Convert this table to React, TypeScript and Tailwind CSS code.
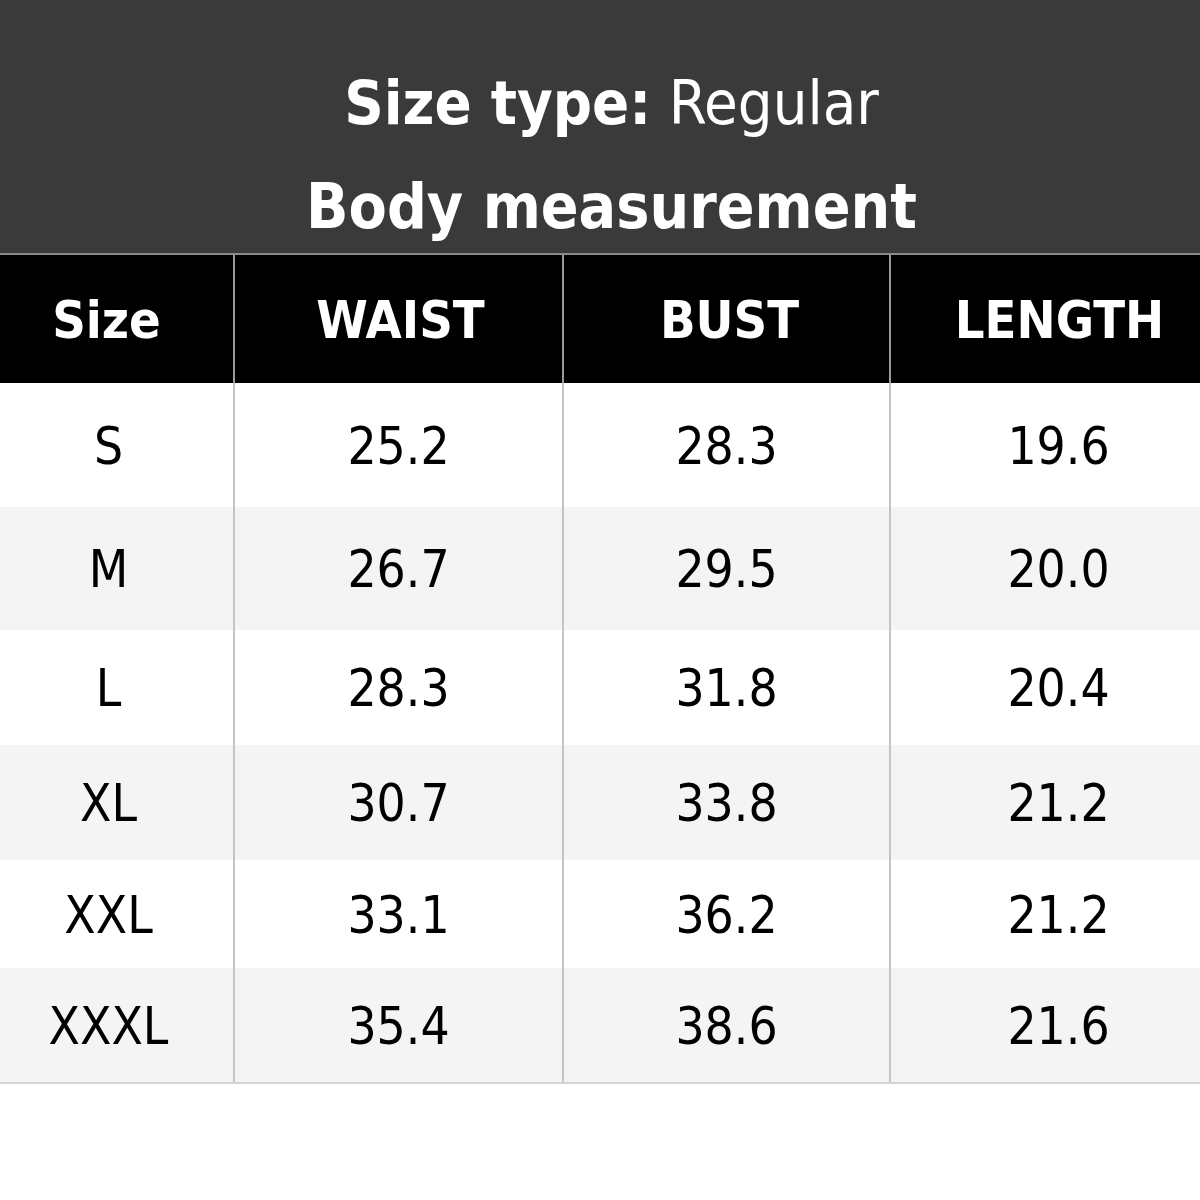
import React from "react";

const rows: { size: string; waist: string; bust: string; length: string; h: string; bg: string }[] = [
  { size: "S", waist: "25.2", bust: "28.3", length: "19.6", h: "h-[124px]", bg: "bg-white" },
  { size: "M", waist: "26.7", bust: "29.5", length: "20.0", h: "h-[123px]", bg: "bg-[#f4f4f4]" },
  { size: "L", waist: "28.3", bust: "31.8", length: "20.4", h: "h-[115px]", bg: "bg-white" },
  { size: "XL", waist: "30.7", bust: "33.8", length: "21.2", h: "h-[115px]", bg: "bg-[#f4f4f4]" },
  { size: "XXL", waist: "33.1", bust: "36.2", length: "21.2", h: "h-[108px]", bg: "bg-white" },
  { size: "XXXL", waist: "35.4", bust: "38.6", length: "21.6", h: "h-[114px]", bg: "bg-[#f4f4f4]" },
];

const font = { fontFamily: '"DejaVu Sans Condensed", "DejaVu Sans", sans-serif', fontStretch: "condensed" as const };

export default function App() {
  return (
    <div className="w-[1200px] h-[1200px] bg-white overflow-hidden" style={font}>
      <div className="h-[253px] bg-[#3a3a3a] flex flex-col items-center text-white pl-[23px]">
        <div className="mt-[70px] text-[61px] leading-[66px]">
          <span className="font-bold">Size type:</span> Regular
        </div>
        <div className="mt-[36px] text-[62px] leading-[70px] font-bold">Body measurement</div>
      </div>
      <div className="h-[2px] bg-[#8a8a8a]" />
      <div className="grid grid-cols-[233px_2px_327px_2px_325px_2px_309px] h-[128px] bg-black text-white font-bold text-[52px]">
        <div className="flex items-center justify-center pr-[20px] pt-[2px]">Size</div>
        <div className="bg-[#9a9a9a]" />
        <div className="flex items-center justify-center pl-[4px] pt-[2px]">WAIST</div>
        <div className="bg-[#9a9a9a]" />
        <div className="flex items-center justify-center pl-[6px] pt-[2px]">BUST</div>
        <div className="bg-[#9a9a9a]" />
        <div className="flex items-center justify-center pl-[28px] pt-[2px]">LENGTH</div>
      </div>
      {rows.map((r) => (
        <div
          key={r.size}
          className={`grid grid-cols-[233px_2px_327px_2px_325px_2px_309px] ${r.h} ${r.bg} text-black text-[51px]`}
        >
          <div className="flex items-center justify-center pr-[16px] pt-[4px]">{r.size}</div>
          <div className="bg-[#c4c4c4]" />
          <div className="flex items-center justify-center pt-[4px]">{r.waist}</div>
          <div className="bg-[#c4c4c4]" />
          <div className="flex items-center justify-center pt-[4px]">{r.bust}</div>
          <div className="bg-[#c4c4c4]" />
          <div className="flex items-center justify-center pl-[26px] pt-[4px]">{r.length}</div>
        </div>
      ))}
      <div className="h-[2px] bg-[#d4d4d4]" />
    </div>
  );
}
